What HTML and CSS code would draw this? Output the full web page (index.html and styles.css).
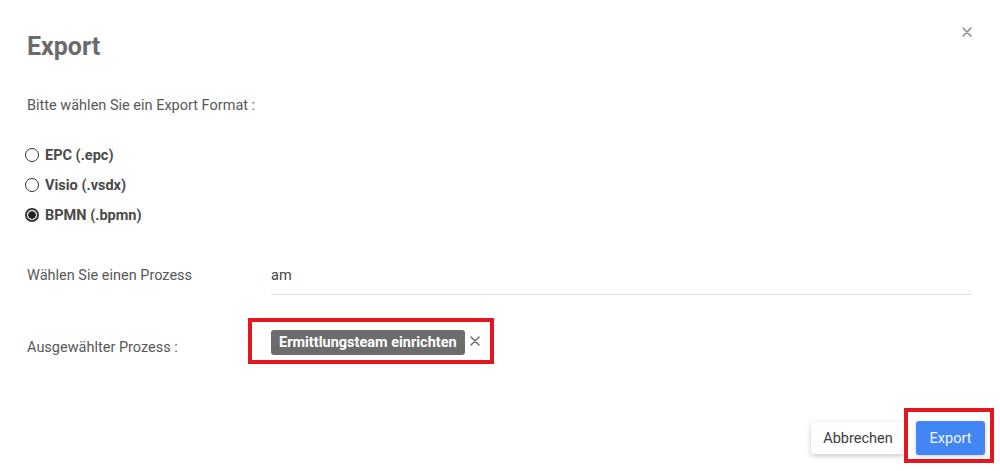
FILE: index.html
```html
<!DOCTYPE html>
<html lang="de">
<head>
    <meta charset="UTF-8">
    <meta name="viewport" content="width=device-width, initial-scale=1.0">
    <title>Export</title>
    <link rel="stylesheet" href="styles.css">
</head>
<body>
    <div class="modal">
        <div class="modal-header">
            <h2>Export</h2>
            <button class="close" aria-label="Schließen">
                <svg width="10" height="10" viewBox="0 0 10 10"><path d="M1 1L9 9M9 1L1 9" stroke="#8a8a8a" stroke-width="1.6" stroke-linecap="round"/></svg>
            </button>
        </div>

        <p class="intro">Bitte wählen Sie ein Export Format :</p>

        <div class="formats">
            <label class="radio"><input type="radio" name="format" value="epc"><span>EPC (.epc)</span></label>
            <label class="radio"><input type="radio" name="format" value="vsdx"><span>Visio (.vsdx)</span></label>
            <label class="radio"><input type="radio" name="format" value="bpmn" checked><span>BPMN (.bpmn)</span></label>
        </div>

        <div class="row">
            <label class="row-label" for="process">Wählen Sie einen Prozess</label>
            <input type="text" id="process" class="process-input" value="am">
        </div>

        <div class="row selected-row">
            <span class="row-label selected-label">Ausgewählter Prozess :</span>
            <div class="highlight selected-box">
                <span class="tag">Ermittlungsteam einrichten</span>
                <button class="tag-remove" aria-label="Entfernen">
                    <svg width="10" height="10" viewBox="0 0 10 10"><path d="M1 1L9 9M9 1L1 9" stroke="#6a6a6a" stroke-width="1.5" stroke-linecap="round"/></svg>
                </button>
            </div>
        </div>

        <div class="modal-footer">
            <button class="btn btn-cancel">Abbrechen</button>
            <div class="highlight export-box">
                <button class="btn btn-primary">Export</button>
            </div>
        </div>
    </div>
</body>
</html>
```

FILE: styles.css
```css
body {
    font-family: Roboto, "Liberation Sans", Arial, sans-serif;
    margin: 0;
    padding: 0;
    background-color: #ffffff;
    color: #555;
}
.modal {
    height: 471px;
    box-sizing: border-box;
    padding: 33px 6px 0 27px;
}
.modal-header {
    display: flex;
    justify-content: space-between;
    align-items: flex-start;
    padding-right: 22px;
}
.modal-header h2 {
    margin: 0;
    font-size: 25px;
    line-height: 28px;
    font-weight: 700;
    color: #6a6a6a;
}
.close {
    border: none;
    background: none;
    padding: 0;
    margin-top: -6px;
    width: 10px;
    height: 10px;
    display: flex;
    cursor: pointer;
}
.intro {
    margin: 35px 0 0;
    font-size: 14.5px;
    line-height: 20px;
    color: #585858;
}
.formats {
    margin-top: 29px;
    display: flex;
    flex-direction: column;
    gap: 10px;
}
.radio {
    display: flex;
    align-items: center;
    height: 20px;
    font-size: 14.5px;
    font-weight: 700;
    color: #4a4a4a;
    margin-left: -2px;
}
.radio input {
    appearance: none;
    -webkit-appearance: none;
    width: 14px;
    height: 14px;
    margin: 0 6px 0 0;
    border: 1px solid #333;
    border-radius: 50%;
    box-sizing: border-box;
    background: #fff;
}
.radio input:checked {
    border: 2px solid #333;
    background: radial-gradient(circle, #222 0 3.5px, #fff 4px);
}
.row {
    display: flex;
    align-items: center;
    margin-top: 31px;
}
.row-label {
    width: 244px;
    flex-shrink: 0;
    font-size: 14.5px;
    line-height: 20px;
    color: #585858;
}
.process-input {
    flex: 1;
    height: 39px;
    box-sizing: border-box;
    border: none;
    border-bottom: 1px solid #e3e3e3;
    padding: 0;
    margin-right: 22px;
    font-family: inherit;
    font-size: 14.5px;
    color: #444;
    outline: none;
}
.selected-row {
    margin-top: 23px;
    align-items: flex-start;
}
.selected-label {
    width: 221px;
    margin-top: 20px;
}
.highlight {
    border: 4px solid #e5161f;
}
.selected-box {
    display: flex;
    align-items: center;
    padding: 8px 10px 5px 19px;
}
.tag {
    display: inline-block;
    height: 25px;
    line-height: 25px;
    padding: 0 8px;
    background-color: #6c6c6c;
    color: #fff;
    font-size: 14.5px;
    font-weight: 700;
    border-radius: 3px;
}
.tag-remove {
    border: none;
    background: none;
    padding: 0;
    margin: -4px 0 0 5px;
    width: 10px;
    height: 10px;
    display: flex;
    cursor: pointer;
}
.modal-footer {
    display: flex;
    justify-content: flex-end;
    align-items: flex-start;
    margin-top: 44px;
}
.btn {
    font-family: inherit;
    font-size: 14.5px;
    border: none;
    border-radius: 3px;
    cursor: pointer;
}
.btn-cancel {
    margin-top: 14px;
    height: 32px;
    width: 94px;
    background: #fff;
    color: #3c3c3c;
    box-shadow: 0 2px 5px rgba(0, 0, 0, 0.16), 0 2px 8px rgba(0, 0, 0, 0.06);
    margin-right: -1px;
}
.export-box {
    padding: 9px 5px 4px 8px;
}
.btn-primary {
    display: block;
    height: 34px;
    width: 69px;
    background-color: #4285f4;
    color: #f4f7ff;
    box-shadow: 0 2px 5px rgba(0, 0, 0, 0.16);
}
```
